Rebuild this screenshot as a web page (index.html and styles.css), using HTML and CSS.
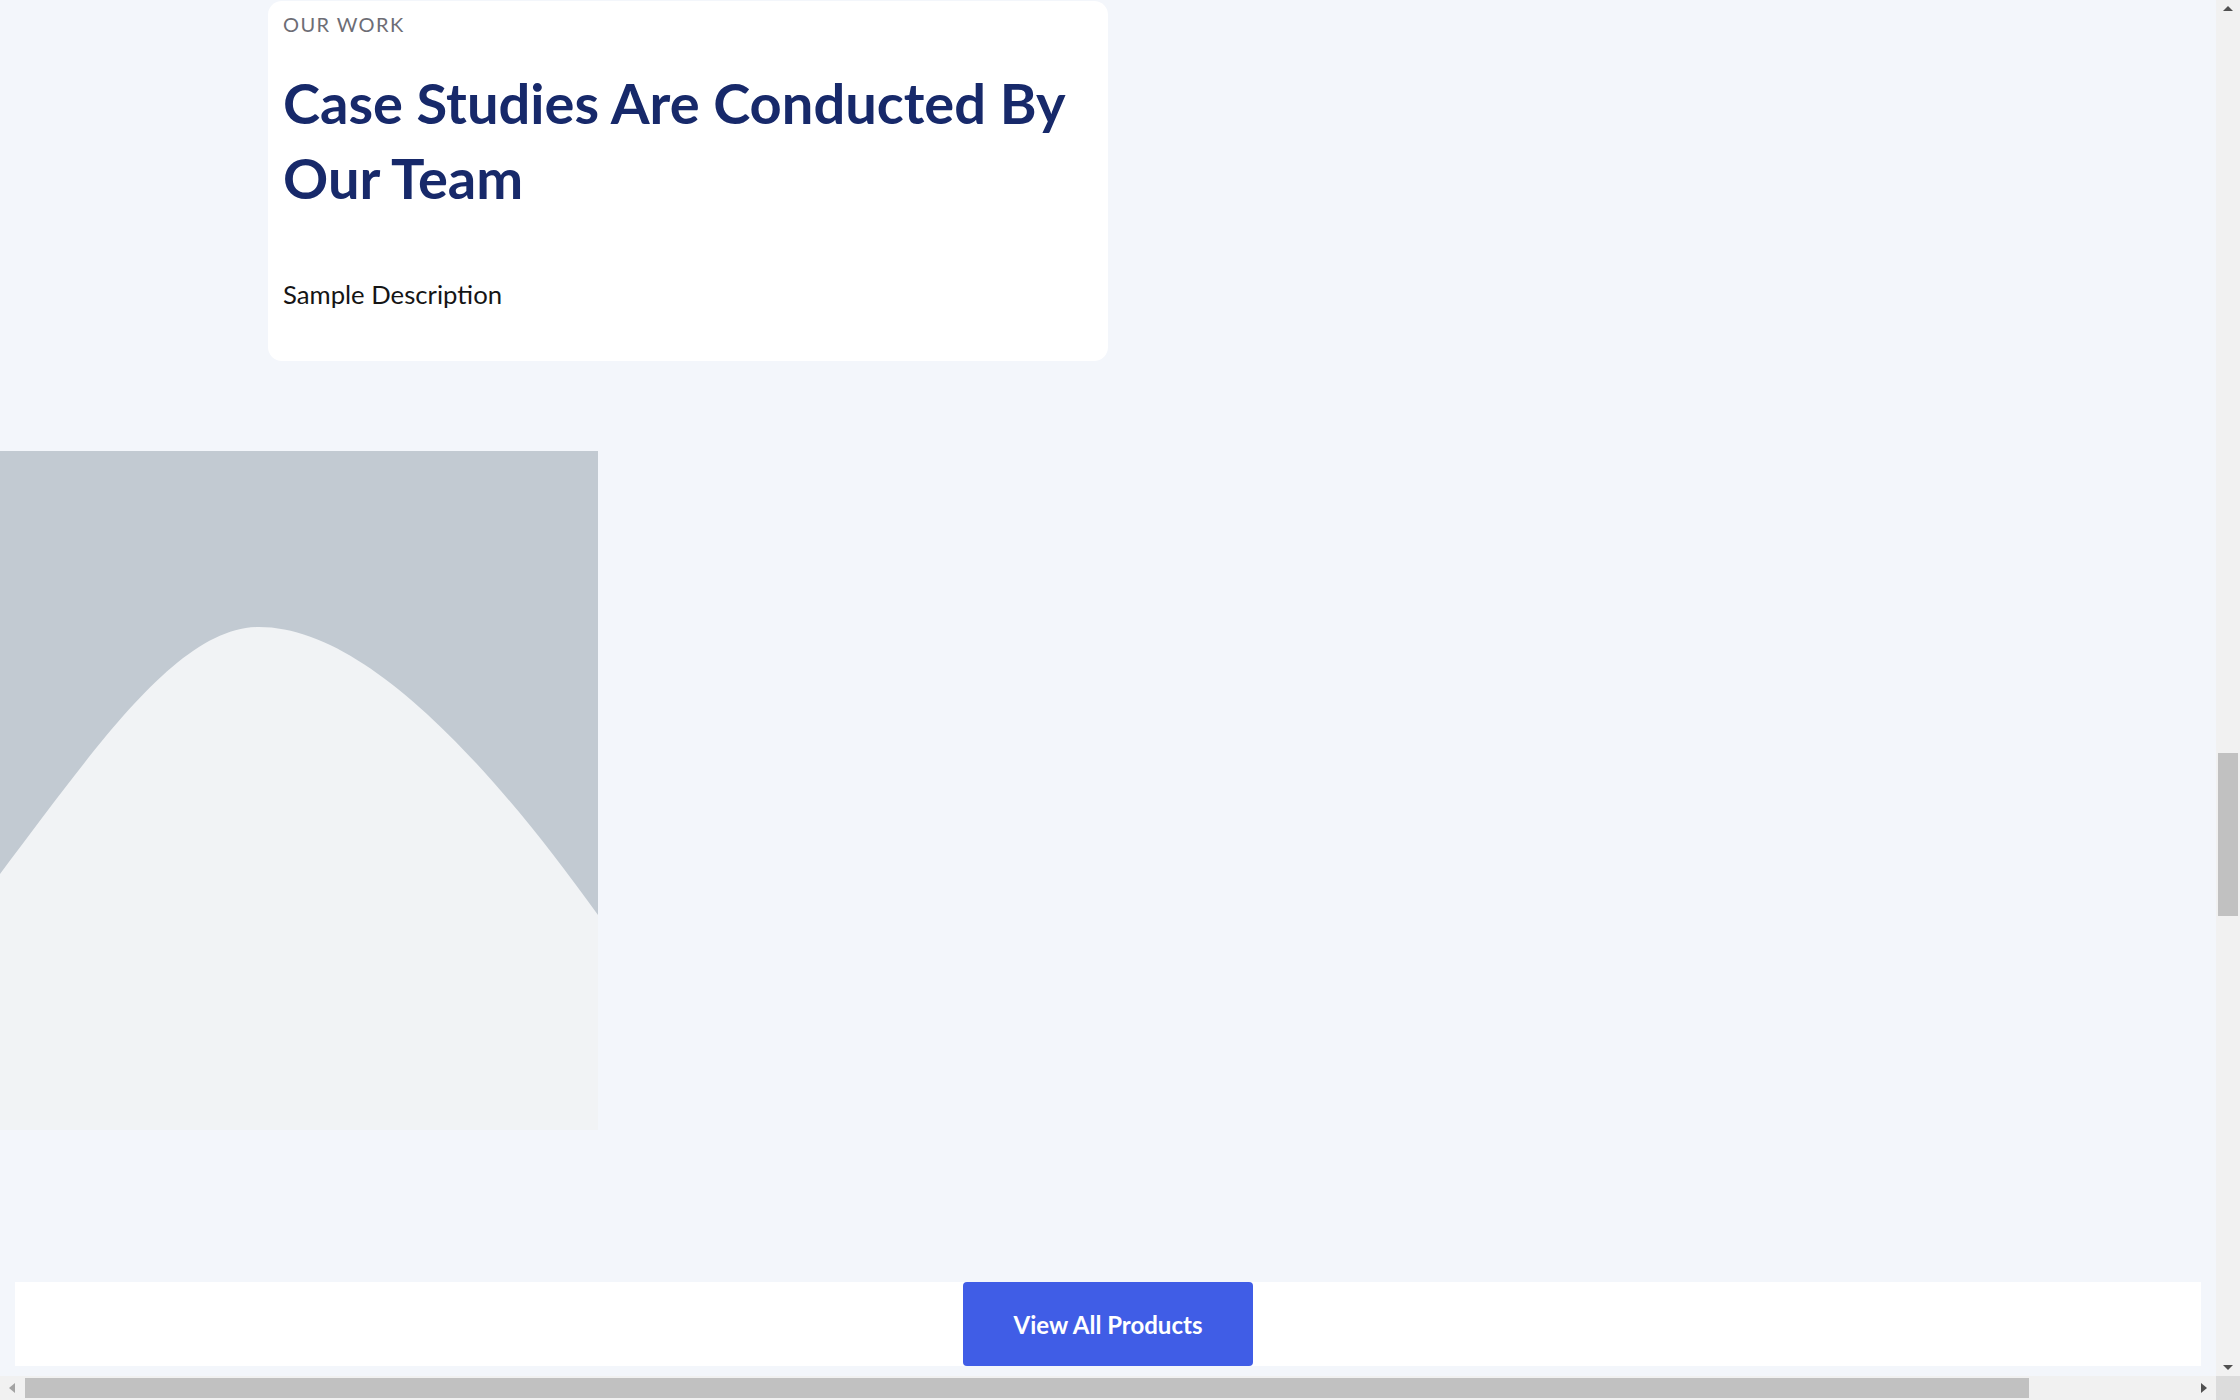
FILE: index.html
```html
<!DOCTYPE html>
<html lang="en">
<head>
<meta charset="utf-8">
<title>Our Work</title>
<link rel="stylesheet" href="styles.css">
</head>
<body>
<div class="window">
  <main class="viewport">
    <section class="work">
      <div class="card">
        <p class="eyebrow">OUR WORK</p>
        <h2 class="title">Case Studies Are Conducted By Our Team</h2>
        <p class="desc">Sample Description</p>
      </div>
    </section>
    <figure class="media">
      <svg class="placeholder" viewBox="0 0 598 679" preserveAspectRatio="none" aria-hidden="true">
        <rect width="598" height="679" fill="#c2cad2"/>
        <path d="M0,423 C100,290 180,176 259,176 C360,176 480,300 598,464 L598,679 L0,679 Z" fill="#f1f3f5"/>
      </svg>
    </figure>
    <div class="actions">
      <a class="btn" href="#">View All Products</a>
    </div>
  </main>
  <div class="vscroll">
    <span class="arrow arrow-up"></span>
    <div class="vtrack"><span class="vthumb"></span></div>
    <span class="arrow arrow-down"></span>
  </div>
  <div class="hscroll">
    <span class="arrow arrow-left"></span>
    <div class="htrack"><span class="hthumb"></span></div>
    <span class="arrow arrow-right"></span>
  </div>
  <div class="corner"></div>
</div>
</body>
</html>
```

FILE: styles.css
```css
* { box-sizing: border-box; }
html, body { margin: 0; padding: 0; }
body {
  width: 2240px;
  height: 1400px;
  overflow: hidden;
  font-family: Lato, "Open Sans", sans-serif;
  background: #f3f6fb;
}
.window {
  display: grid;
  grid-template-columns: 2216px 24px;
  grid-template-rows: 1376px 24px;
  width: 2240px;
  height: 1400px;
}
.viewport {
  overflow: hidden;
  background: #f3f6fb;
  display: flex;
  flex-direction: column;
  align-items: flex-start;
}
.work {
  padding-left: 268px;
  padding-top: 1px;
}
.card {
  width: 840px;
  background: #ffffff;
  border-radius: 14px;
  padding: 11px 15px 49px;
}
.eyebrow {
  margin: 0;
  font-size: 20px;
  line-height: 24px;
  letter-spacing: 1.4px;
  color: #6d6d75;
  font-weight: 400;
}
.title {
  margin: 29px 0 0;
  font-size: 56px;
  line-height: 75px;
  font-weight: 700;
  color: #17296a;
}
.desc {
  margin: 61px 0 0;
  font-size: 25.7px;
  line-height: 36px;
  color: #151515;
}
.media {
  margin: 90px 0 0;
  width: 598px;
  height: 679px;
}
.placeholder {
  display: block;
  width: 598px;
  height: 679px;
}
.actions {
  margin: 152px 15px 0;
  align-self: stretch;
  height: 84px;
  background: #ffffff;
  display: flex;
  justify-content: center;
}
.btn {
  width: 290px;
  height: 84px;
  background: #405de6;
  border-radius: 4px;
  color: #ffffff;
  text-decoration: none;
  font-size: 24px;
  font-weight: 700;
  display: flex;
  align-items: center;
  justify-content: center;
}
.vscroll {
  background: #f1f1f1;
  display: flex;
  flex-direction: column;
  align-items: center;
}
.vtrack {
  flex: 1;
  width: 24px;
  padding-top: 736px;
}
.vthumb {
  display: block;
  width: 20px;
  height: 163px;
  margin: 0 auto;
  background: #c1c1c1;
}
.hscroll {
  background: #f1f1f1;
  display: flex;
  align-items: center;
}
.htrack {
  flex: 1;
  height: 24px;
  display: flex;
  align-items: center;
  padding-left: 1px;
}
.hthumb {
  display: block;
  width: 2004px;
  height: 20px;
  background: #c1c1c1;
}
.corner { background: #dcdcdc; }
.arrow {
  flex: none;
  width: 24px;
  height: 17px;
  display: flex;
  align-items: center;
  justify-content: center;
}
.arrow::before {
  content: "";
  width: 0;
  height: 0;
  border-style: solid;
}
.arrow-up::before {
  border-width: 0 5px 5px 5px;
  border-color: transparent transparent #505050 transparent;
}
.arrow-down::before {
  border-width: 5px 5px 0 5px;
  border-color: #505050 transparent transparent transparent;
}
.arrow-left, .arrow-right { width: 24px; height: 24px; }
.arrow-left::before {
  border-width: 5px 6px 5px 0;
  border-color: transparent #a3a3a3 transparent transparent;
}
.arrow-right::before {
  border-width: 5px 0 5px 6px;
  border-color: transparent transparent transparent #505050;
}
```
